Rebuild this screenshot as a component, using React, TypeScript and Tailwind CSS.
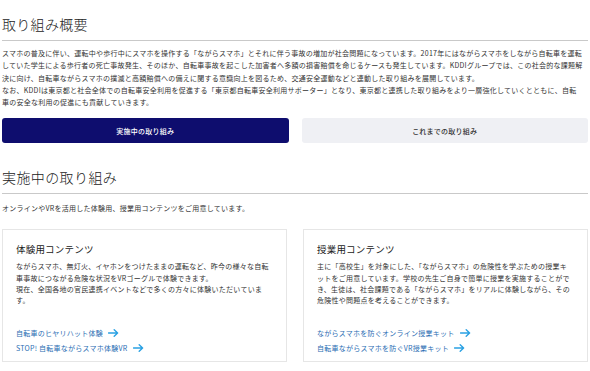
const font = { fontFamily: '"Noto Sans CJK JP", "Noto Sans", sans-serif' };

function Arrow() {
  return (
    <svg width="11" height="8" viewBox="0 0 11 8" fill="none" className="ml-[5px] shrink-0">
      <path d="M0.5 4H9.5M6.2 0.8L9.6 4L6.2 7.2" stroke="#2aa1e3" strokeWidth="1.4" strokeLinecap="round" strokeLinejoin="round" />
    </svg>
  );
}

interface ContentCard {
  title: string;
  lines: string[];
  links: string[];
}

// lines are written out as they break in the layout
const cards: ContentCard[] = [
  {
    title: "体験用コンテンツ",
    lines: [
      "ながらスマホ、無灯火、イヤホンをつけたままの運転など、昨今の様々な自転",
      "車事故につながる危険な状況をVRゴーグルで体験できます。",
      "現在、全国各地の官民連携イベントなどで多くの方々に体験いただいていま",
      "す。",
    ],
    links: ["自転車のヒヤリハット体験", "STOP! 自転車ながらスマホ体験VR"],
  },
  {
    title: "授業用コンテンツ",
    lines: [
      "主に「高校生」を対象にした、「ながらスマホ」の危険性を学ぶための授業キ",
      "ットをご用意しています。学校の先生ご自身で簡単に授業を実施することがで",
      "き、生徒は、社会課題である「ながらスマホ」をリアルに体験しながら、その",
      "危険性や問題点を考えることができます。",
    ],
    links: ["ながらスマホを防ぐオンライン授業キット", "自転車ながらスマホを防ぐVR授業キット"],
  },
];

export default function App() {
  return (
    <div className="bg-white text-[#333] px-[2px] w-[590px]" style={font}>
      {/* overview */}
      <h2 className="mt-[14px] text-[14px] leading-[20px] tracking-[0.3px] font-light text-[#222] pb-[6px] border-b border-[#c9c9c9]">
        取り組み概要
      </h2>
      <p className="mt-[6px] text-[7px] leading-[12.25px] tracking-[0.25px] whitespace-nowrap">
        スマホの普及に伴い、運転中や歩行中にスマホを操作する「ながらスマホ」とそれに伴う事故の増加が社会問題になっています。2017年にはながらスマホをしながら自転車を運転
        <br />
        していた学生による歩行者の死亡事故発生、そのほか、自転車事故を起こした加害者へ多額の損害賠償を命じるケースも発生しています。KDDIグループでは、この社会的な課題解
        <br />
        決に向け、自転車ながらスマホの撲滅と高額賠償への備えに関する意識向上を図るため、交通安全運動などと連動した取り組みを展開しています。
        <br />
        なお、KDDIは東京都と社会全体での自転車安全利用を促進する「東京都自転車安全利用サポーター」となり、東京都と連携した取り組みをより一層強化していくとともに、自転
        <br />
        車の安全な利用の促進にも貢献していきます。
      </p>

      {/* tabs */}
      <div className="mt-[10px] flex gap-[13px]">
        <button className="flex-1 h-[25px] rounded-[3px] bg-[#0e0d6e] text-white text-[7px] font-medium tracking-[0.25px]">
          実施中の取り組み
        </button>
        <button className="flex-1 h-[25px] rounded-[3px] bg-[#eff0f4] text-[#333] text-[7px] font-medium tracking-[0.25px]">
          これまでの取り組み
        </button>
      </div>

      {/* current */}
      <h2 className="mt-[24px] text-[14px] leading-[20px] tracking-[0.4px] font-light text-[#222] pb-[6px] border-b border-[#c9c9c9]">
        実施中の取り組み
      </h2>
      <p className="mt-[8px] text-[7px] leading-[12px] tracking-[0.25px]">
        オンラインやVRを活用した体験用、授業用コンテンツをご用意しています。
      </p>

      <div className="mt-[15px] flex gap-[16px]">
        {cards.map((card) => (
          <div key={card.title} className="w-[285px] h-[133px] border border-[#e6e6e6] px-[13px] pt-[12px] flex flex-col">
            <h3 className="text-[9.5px] leading-[14px] tracking-[0.2px] text-[#222]">{card.title}</h3>
            <div className="mt-[5px] text-[7px] leading-[11.4px] tracking-[0.25px] whitespace-nowrap">
              {card.lines.map((line) => (
                <div key={line}>{line}</div>
              ))}
            </div>
            <div className="mt-auto mb-[6px] flex flex-col gap-[1px]">
              {card.links.map((link) => (
                <a key={link} href="#" className="flex items-center h-[14px] text-[7px] tracking-[0.25px] text-[#2a6db3]">
                  {link}
                  <Arrow />
                </a>
              ))}
            </div>
          </div>
        ))}
      </div>
    </div>
  );
}
